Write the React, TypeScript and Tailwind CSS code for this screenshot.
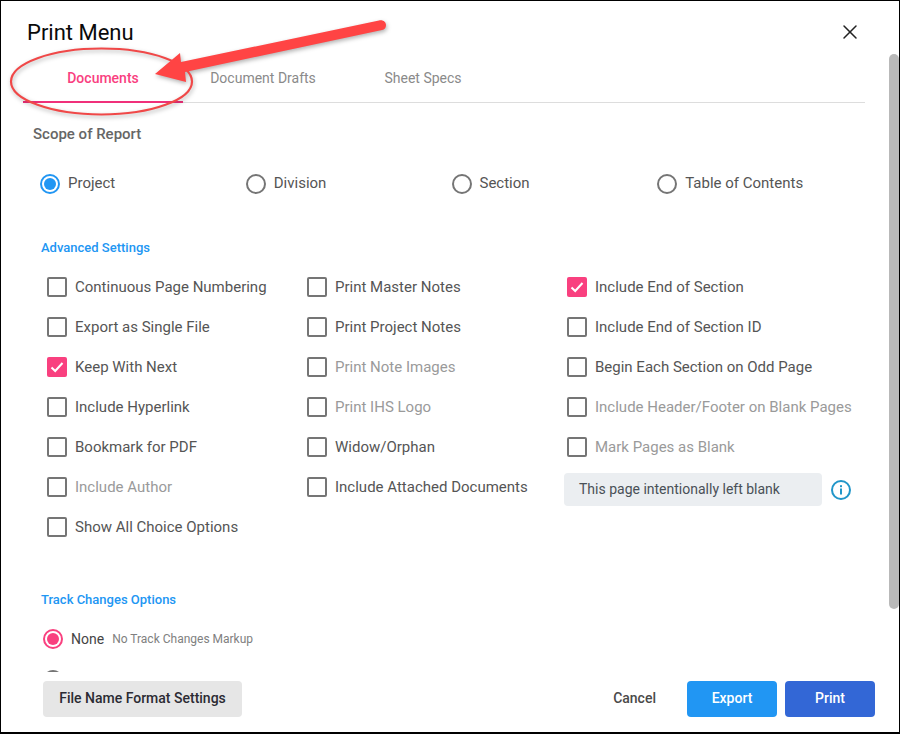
import { X } from 'lucide-react'

type Opt = { label: string; checked?: boolean; disabled?: boolean }

const col1: Opt[] = [
  { label: 'Continuous Page Numbering' },
  { label: 'Export as Single File' },
  { label: 'Keep With Next', checked: true },
  { label: 'Include Hyperlink' },
  { label: 'Bookmark for PDF' },
  { label: 'Include Author', disabled: true },
  { label: 'Show All Choice Options' },
]

const col2: Opt[] = [
  { label: 'Print Master Notes' },
  { label: 'Print Project Notes' },
  { label: 'Print Note Images', disabled: true },
  { label: 'Print IHS Logo', disabled: true },
  { label: 'Widow/Orphan' },
  { label: 'Include Attached Documents' },
]

const col3: Opt[] = [
  { label: 'Include End of Section', checked: true },
  { label: 'Include End of Section ID' },
  { label: 'Begin Each Section on Odd Page' },
  { label: 'Include Header/Footer on Blank Pages', disabled: true },
  { label: 'Mark Pages as Blank', disabled: true },
]

function CheckRow({ label, checked, disabled }: Opt) {
  return (
    <div className="flex h-10 items-center">
      {checked ? (
        <span className="flex h-5 w-5 items-center justify-center rounded-[2px] bg-[#f9407f]">
          <svg width="14" height="14" viewBox="0 0 14 14" fill="none" stroke="white" strokeWidth="2">
            <path d="M1.5 7.5 L5.2 11 L12.5 3" />
          </svg>
        </span>
      ) : (
        <span className="h-5 w-5 rounded-[2px] border-2 border-[#757575]" />
      )}
      <span className={`ml-2 text-[15px] whitespace-nowrap ${disabled ? 'text-[#9a9a9a]' : 'text-[#555555]'}`}>
        {label}
      </span>
    </div>
  )
}

function Column({ items, className, children }: { items: Opt[]; className: string; children?: React.ReactNode }) {
  return (
    <div className={className}>
      {items.map((o) => (
        <CheckRow key={o.label} {...o} />
      ))}
      {children}
    </div>
  )
}

function ScopeRadio({ label, active }: { label: string; active?: boolean }) {
  return (
    <div className="flex items-center">
      <span className={`flex h-5 w-5 items-center justify-center rounded-full border-2 ${active ? 'border-[#2196f3]' : 'border-[#757575]'}`}>
        {active && <span className="h-3 w-3 rounded-full bg-[#2196f3]" />}
      </span>
      <span className="ml-2 pb-[1px] text-[15px] leading-5 text-[#555555]">{label}</span>
    </div>
  )
}

export default function App() {
  return (
    <div className="relative flex h-[734px] w-[900px] flex-col overflow-hidden border border-b-2 border-black bg-white font-['Roboto',sans-serif]">
      <div className="flex h-[53px] items-center justify-between pr-[37px] pl-[26px] pt-[10px]">
        <h1 className="text-[22px] leading-none text-[#0a0a0a]">Print Menu</h1>
        <X className="-mt-px h-6 w-6 text-[#222222]" strokeWidth={1.5} />
      </div>

      <div className="mr-[34px] ml-[22px] flex h-[49px] shrink-0 border-b border-[#dddddd]">
        <div className="flex h-[49px] w-40 items-center justify-center border-b-2 border-[#f0307a] pt-[2px] text-[14px] font-medium text-[#f9407f]">
          Documents
        </div>
        <div className="flex h-12 w-40 items-center justify-center text-[14px] text-[#8a8a8a]">Document Drafts</div>
        <div className="flex h-12 w-40 items-center justify-center text-[14px] text-[#8a8a8a]">Sheet Specs</div>
      </div>

      <div className="min-h-0 flex-1 overflow-hidden">
        <div className="mt-[21px] ml-8 text-[15px] leading-5 font-medium text-[#666666]">Scope of Report</div>

        <div className="mt-[29px] ml-[39px] grid h-5 w-[823px] grid-cols-4">
          <ScopeRadio label="Project" active />
          <ScopeRadio label="Division" />
          <ScopeRadio label="Section" />
          <ScopeRadio label="Table of Contents" />
        </div>

        <div className="mt-[47px] ml-10 text-[13px] leading-4 font-medium text-[#2196f3]">Advanced Settings</div>

        <div className="mt-[11px] ml-[46px] flex">
          <Column items={col1} className="w-[260px]" />
          <Column items={col2} className="w-[260px]" />
          <Column items={col3} className="w-[300px]">
            <div className="mt-[6px] flex items-center">
              <div className="-ml-[3px] flex h-[33px] w-[258px] items-center rounded-[4px] bg-[#ebeef1] pl-[15px] text-[14px] text-[#495057]">
                This page intentionally left blank
              </div>
              <svg className="ml-[9px]" width="20" height="20" viewBox="0 0 20 20" fill="none">
                <circle cx="10" cy="10" r="9" stroke="#2196c9" strokeWidth="2" />
                <rect x="9" y="8.5" width="2" height="6" fill="#2196c9" />
                <rect x="9" y="5.2" width="2" height="2" fill="#2196c9" />
              </svg>
            </div>
          </Column>
        </div>

        <div className="mt-[45px] ml-10 text-[13px] leading-4 font-medium text-[#2196f3]">Track Changes Options</div>

        <div className="mt-[21px] ml-[42px] flex h-5 items-center">
          <span className="flex h-5 w-5 items-center justify-center rounded-full border-2 border-[#f9407f]">
            <span className="h-3 w-3 rounded-full bg-[#f9407f]" />
          </span>
          <span className="ml-2 text-[14px] text-[#444444]">None</span>
          <span className="ml-2 text-[12px] text-[#808080]">No Track Changes Markup</span>
        </div>
        <div className="mt-[21px] ml-[42px] h-5 w-5 rounded-full border-2 border-[#757575]" />
      </div>

      <div className="flex h-[60px] shrink-0 items-start justify-between pr-6 pl-[42px] pt-[9px]">
        <button className="h-9 w-[199px] rounded-[4px] bg-[#e6e6e6] pb-px text-[14px] font-medium text-[#2b2b33]">
          File Name Format Settings
        </button>
        <div className="flex items-center">
          <button className="mr-[31px] pb-[2px] text-[14px] font-medium text-[#4a4a4a]">Cancel</button>
          <button className="h-9 w-[90px] rounded-[4px] bg-[#2196f3] pb-px text-[14px] font-medium text-white">Export</button>
          <button className="ml-2 h-9 w-[90px] rounded-[4px] bg-[#3367d6] pb-px text-[14px] font-medium text-white">Print</button>
        </div>
      </div>

      {/* overlay scrollbar */}
      <div className="absolute top-[53px] right-0 h-[555px] w-[10px] rounded-t-[5px] rounded-b-[5px] bg-[#b9b9b9]" />

      {/* red annotation drawn on top of the screenshot */}
      <svg className="pointer-events-none absolute top-[-1px] left-[-1px] drop-shadow-[1px_2px_2px_rgba(0,0,0,0.3)]" width="400" height="125" viewBox="0 0 400 125" fill="none">
        <ellipse cx="101.5" cy="81.5" rx="90.5" ry="33" stroke="#f04848" strokeWidth="2.2" />
        <path d="M379 20.5 C383 19.5 386 22 386 25 C386 28 384.5 29.5 382 30 L185 72 L186 82 L155 74 L180 53 L181 62 Z" fill="#ff4444" />
      </svg>
    </div>
  )
}
